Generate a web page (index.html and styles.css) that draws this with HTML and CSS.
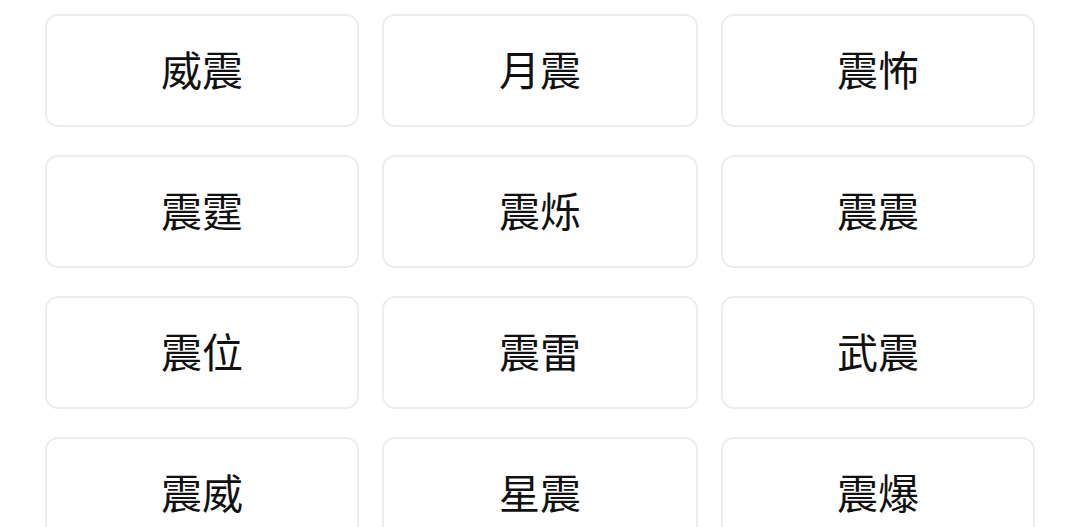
FILE: index.html
```html
<!DOCTYPE html>
<html>
<head>
    <meta charset="utf-8">
    <link rel="stylesheet" href="styles.css">
</head>
<body>
    <div class="name-grid">
        <div class="name-card">威震</div>
        <div class="name-card">月震</div>
        <div class="name-card">震怖</div>
        <div class="name-card">震霆</div>
        <div class="name-card">震烁</div>
        <div class="name-card">震震</div>
        <div class="name-card">震位</div>
        <div class="name-card">震雷</div>
        <div class="name-card">武震</div>
        <div class="name-card">震威</div>
        <div class="name-card">星震</div>
        <div class="name-card">震爆</div>
    </div>
</body>
</html>
```

FILE: styles.css
```css
body {
    margin: 0;
    background: #ffffff;
    font-family: "Noto Sans CJK SC", "Noto Sans", sans-serif;
}

.name-grid {
    display: grid;
    grid-template-columns: 314px 316px 314px;
    column-gap: 23px;
    row-gap: 28px;
    padding: 14px 45px;
}

.name-card {
    height: 113px;
    box-sizing: border-box;
    border: 2px solid #ededed;
    border-radius: 13px;
    padding-bottom: 4px;
    display: flex;
    align-items: center;
    justify-content: center;
    font-size: 41px;
    color: #111111;
    line-height: 1;
}
```
